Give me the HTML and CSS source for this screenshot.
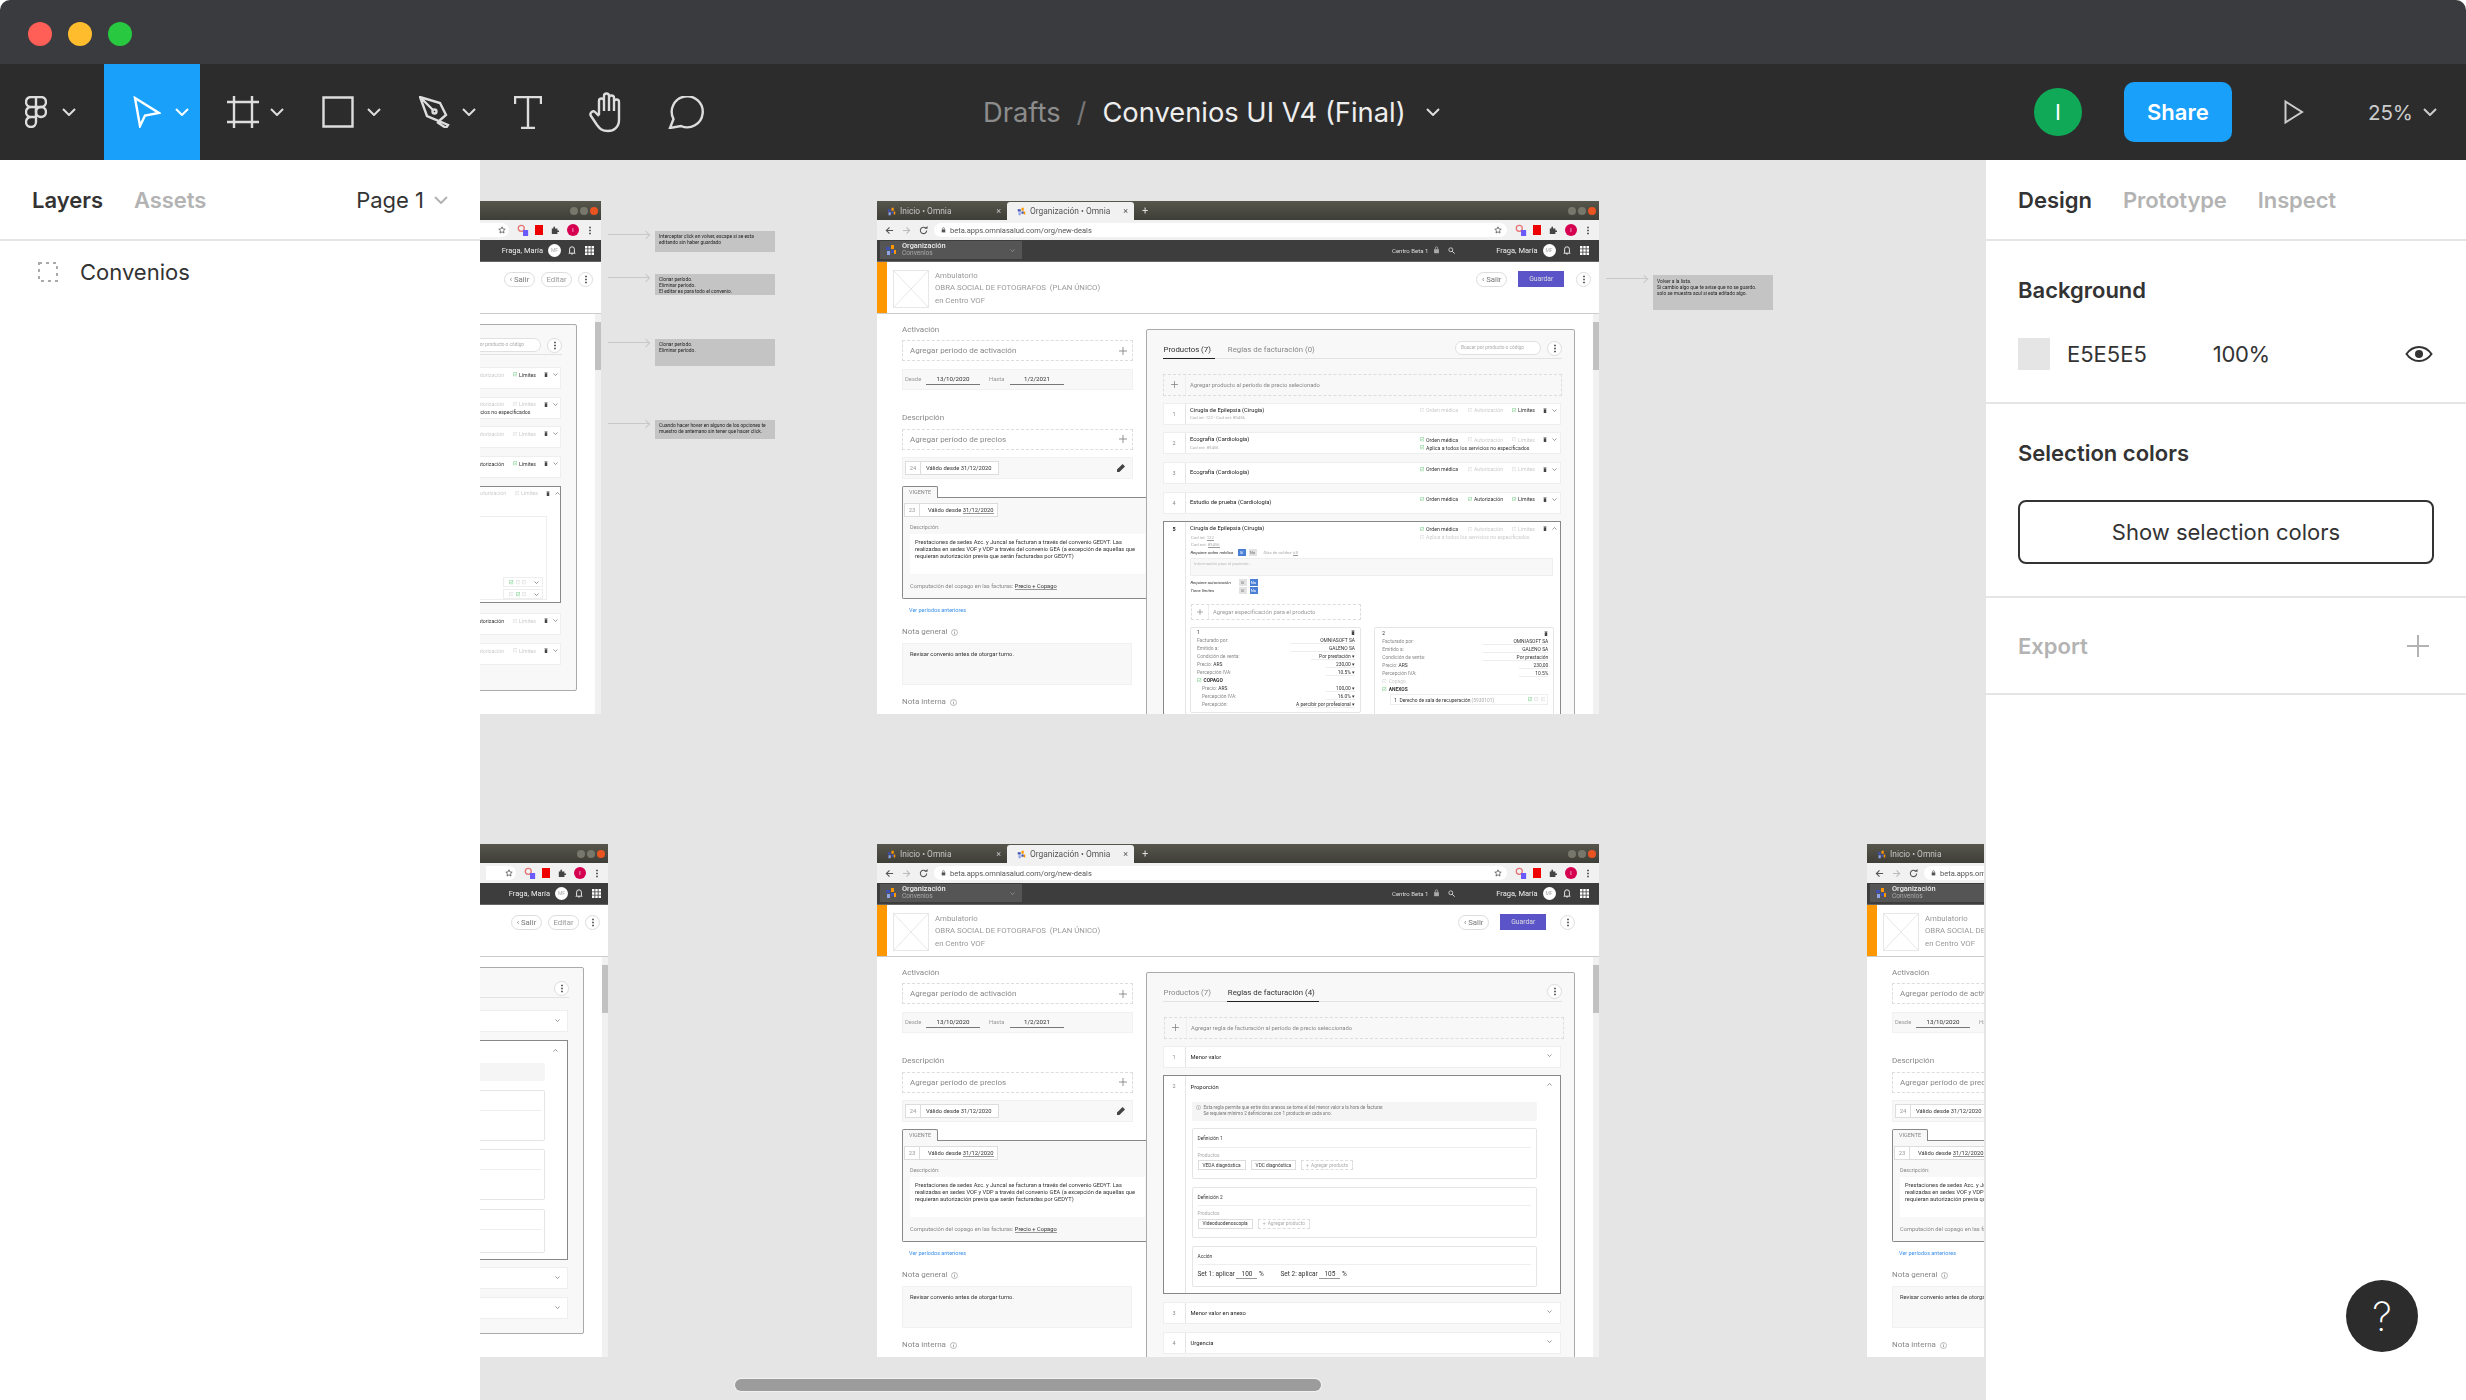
FILE: index.html
```html
<!DOCTYPE html>
<html lang="es">
<head>
    <meta charset="UTF-8">
    <title>Convenios UI V4 (Final) - Figma</title>
    <link rel="stylesheet" href="styles.css">
</head>
<body>
<svg class="sprite" width="0" height="0">
    <symbol id="i-logo" viewBox="0 0 12 12"><path fill="#3f51b5" d="M1 3h4v3H1zM6 6h3v3H6z"/><path fill="#ff9800" d="M6 1h3v4H6zM9 6h2v4H9z"/><path fill="#90a4e8" d="M2 7h3v4H2z"/></symbol>
    <symbol id="i-trash" viewBox="0 0 8 10"><path fill="#444" d="M1.500 2.500h5V10h-5zM1 1h6v1H1z"/></symbol>
    <symbol id="i-box" viewBox="0 0 10 10"><path fill="none" stroke="#ccc" d="M1 1h8v8H1z"/><path stroke="#ccc" d="M3.500 5h3"/></symbol>
    <symbol id="i-check" viewBox="0 0 10 10"><path fill="none" stroke="#5fc46f" d="M1 1h8v8H1z"/><path fill="none" stroke="#5fc46f" d="M2.500 5l2 2 4-5"/></symbol>
    <symbol id="i-down" viewBox="0 0 10 10"><path fill="none" stroke="#555" stroke-width="1.200" d="M1 3l4 4 4-4"/></symbol>
    <symbol id="i-up" viewBox="0 0 10 10"><path fill="none" stroke="#555" stroke-width="1.200" d="M1 7l4-4 4 4"/></symbol>
    <symbol id="i-plus" viewBox="0 0 10 10"><path stroke="#777" d="M5 0v10M0 5h10"/></symbol>
    <symbol id="i-dots" viewBox="0 0 4 12"><path fill="#333" d="M1 1h2v2H1zM1 5h2v2H1zM1 9h2v2H1z"/></symbol>
    <symbol id="i-info" viewBox="0 0 10 10"><circle cx="5" cy="5" r="4.300" fill="none" stroke="#888" stroke-width=".8"/><path stroke="#888" d="M5 4v3.500M5 2.300v1"/></symbol>
    <symbol id="i-bell" viewBox="0 0 10 12"><path fill="none" stroke="#fff" stroke-width="1.100" d="M2 9V5a3 3 0 0 1 6 0v4l1 1H1zM4 11h2"/></symbol>
    <symbol id="i-grid" viewBox="0 0 11 11"><path fill="#fff" d="M0 0h3v3H0zM4 0h3v3H4zM8 0h3v3H8zM0 4h3v3H0zM4 4h3v3H4zM8 4h3v3H8zM0 8h3v3H0zM4 8h3v3H4zM8 8h3v3H8z"/></symbol>
    <symbol id="i-pencil" viewBox="0 0 10 10"><path fill="#444" d="M7 0l3 3-7 7H0V7z"/></symbol>
    <symbol id="i-star" viewBox="0 0 10 10"><path fill="none" stroke="#555" d="M5 1l1.200 2.700 2.800.3-2.100 1.900.6 2.900L5 7.300 2.500 8.800l.6-2.900L1 4l2.800-.3z"/></symbol>
    <symbol id="i-puzzle" viewBox="0 0 10 10"><path fill="#444" d="M1 3h2V1.500a1 1 0 0 1 2 0V3h3v2.500H9.500a1 1 0 0 1 0 2H8V10H1z"/></symbol>
    <symbol id="i-reload" viewBox="0 0 10 10"><path fill="none" stroke="#555" stroke-width="1.200" d="M8.500 5A3.500 3.500 0 1 1 7.500 2.500"/><path fill="#555" d="M6 3h3.500V0z"/></symbol>
    <symbol id="i-back" viewBox="0 0 10 10"><path fill="none" stroke="#555" stroke-width="1.200" d="M9 5H1.500M5 1.500L1.500 5 5 8.500"/></symbol>
    <symbol id="i-fwd" viewBox="0 0 10 10"><path fill="none" stroke="#bbb" stroke-width="1.200" d="M1 5h7.500M5 1.500L8.500 5 5 8.500"/></symbol>
    <symbol id="i-lock" viewBox="0 0 8 10"><path fill="#555" d="M1 4h6v5H1z"/><path fill="none" stroke="#555" d="M2.500 4V2.500a1.500 1.500 0 0 1 3 0V4"/></symbol>
    <symbol id="i-search" viewBox="0 0 10 10"><circle cx="4" cy="4" r="2.800" fill="none" stroke="#ddd" stroke-width="1.200"/><path stroke="#ddd" stroke-width="1.400" d="M6 6l3.500 3.500"/></symbol>
    <symbol id="i-ext" viewBox="0 0 14 14"><circle cx="5" cy="5" r="3.500" fill="none" stroke="#e57373" stroke-width="1.500"/><path fill="#6a5af9" d="M7 7h6v7H7z"/></symbol>
</svg>

<div class="app">
    <div class="titlebar">
        <span class="light light-red"></span>
        <span class="light light-yellow"></span>
        <span class="light light-green"></span>
    </div>

    <div class="toolbar">
        <div class="tool tool-logo">
            <svg width="22" height="32" viewBox="0 0 22 32" class="tool-svg"><path d="M11 1H6a5 5 0 0 0 0 10h5zM11 1h5a5 5 0 0 1 0 10h-5zM11 11H6a5 5 0 0 0 0 10h5zM11 21H6a5 5 0 1 0 5 5z"/><circle cx="16" cy="16" r="5"/></svg>
            <svg class="chev" viewBox="0 0 14 8"><path d="M1 1l6 6 6-6"/></svg>
        </div>
        <div class="tool tool-active">
            <svg width="28" height="32" viewBox="0 0 28 32" class="tool-svg white"><path d="M2 2l24 15-14 2.500L7 30z"/></svg>
            <svg class="chev white" viewBox="0 0 14 8"><path d="M1 1l6 6 6-6"/></svg>
        </div>
        <div class="tool">
            <svg width="32" height="32" viewBox="0 0 32 32" class="tool-svg"><path d="M7 0v32M25 0v32M0 6h32M0 26h32"/></svg>
            <svg class="chev" viewBox="0 0 14 8"><path d="M1 1l6 6 6-6"/></svg>
        </div>
        <div class="tool tool-rect">
            <svg width="32" height="32" viewBox="0 0 32 32" class="tool-svg"><path d="M1.500 1.500h29v29h-29z"/></svg>
            <svg class="chev" viewBox="0 0 14 8"><path d="M1 1l6 6 6-6"/></svg>
        </div>
        <div class="tool">
            <svg width="32" height="32" viewBox="0 0 32 32" class="tool-svg"><path d="M1 1l20 6 6 12-7 6-12-5zM1 1l13 13M20 25l9 4-2 3-9-6"/><circle cx="15.500" cy="15.500" r="2"/></svg>
            <svg class="chev" viewBox="0 0 14 8"><path d="M1 1l6 6 6-6"/></svg>
        </div>
        <div class="tool tool-plain">
            <svg width="28" height="33" viewBox="0 0 28 33" class="tool-svg"><path d="M1 8V1h26v7M14 1v31M7 32h14"/></svg>
        </div>
        <div class="tool tool-plain">
            <svg width="36" height="41" viewBox="0 0 36 41" class="tool-svg"><path d="M10 23V9a2.500 2.500 0 0 1 5 0v10M15 19V4a2.500 2.500 0 0 1 5 0v15M20 19V6a2.500 2.500 0 0 1 5 0v13M25 19V10a2.500 2.500 0 0 1 5 0v18c0 7-5 11-11 11s-8-2-11-6L2 24c-2-3 2-6 4-4l4 4"/></svg>
        </div>
        <div class="tool tool-plain">
            <svg width="36" height="33" viewBox="0 0 36 33" class="tool-svg"><path d="M2 32l3.500-9A15.500 15.500 0 1 1 13 30z"/></svg>
        </div>

        <div class="doc-title">
            <span class="doc-folder">Drafts</span>
            <span class="doc-slash">/</span>
            <span class="doc-name">Convenios UI V4 (Final)</span>
            <svg class="chev" viewBox="0 0 14 8"><path d="M1 1l6 6 6-6"/></svg>
        </div>

        <div class="toolbar-right">
            <span class="avatar">I</span>
            <button class="share">Share</button>
            <svg class="play" width="20" height="24" viewBox="0 0 20 24"><path d="M1.500 1.500L18 12 1.500 22.500z"/></svg>
            <span class="zoom">25%</span>
            <svg class="chev" viewBox="0 0 14 8"><path d="M1 1l6 6 6-6"/></svg>
        </div>
    </div>

    <div class="main">
        <aside class="side side-left">
            <div class="side-tabs">
                <span class="tab-on">Layers</span>
                <span class="tab-off">Assets</span>
                <span class="page-name">Page 1</span>
                <svg class="chev chev-light" viewBox="0 0 14 8"><path d="M1 1l6 6 6-6"/></svg>
            </div>
            <div class="layer-row">
                <svg class="layer-icon" width="20" height="20" viewBox="0 0 20 20"><path d="M1 1h18v18H1z"/></svg>
                <span>Convenios</span>
            </div>
        </aside>

        <div class="canvas">
            <!-- notas del frame superior izquierdo -->
            <div class="note-line note-a"><span class="arrow"></span><div class="note note-h1">Interceptar click en volver, escape si se esta<br>editando sin haber guardado</div></div>
            <div class="note-line note-b"><span class="arrow"></span><div class="note note-h1">Clonar período.<br>Eliminar período.<br>El editar es para todo el convenio.</div></div>
            <div class="note-line note-c"><span class="arrow"></span><div class="note note-h2">Clonar período.<br>Eliminar período.</div></div>
            <div class="note-line note-d"><span class="arrow"></span><div class="note note-h3">Cuando hacer hover en alguno de los opciones te<br>muestro de antemano sin tener que hacer click.</div></div>
            <div class="note-line note-e"><span class="arrow"></span><div class="note note-h4">Volver a la lista.<br>Si cambio algo que te avise que no se guardo.<br>solo se muestra azul si esta editado algo.</div></div>

            <!-- frame A: solo se ve el borde derecho -->
            <div class="frame frame-a">
                <div class="f-tabs"><span class="win"><i></i><i></i><i class="win-close"></i></span></div>
                <div class="f-addr f-addr-right">
                    <span class="addr-pill addr-pill-end"><svg class="ic ic-star"><use href="#i-star"/></svg></span>
                    <svg class="ic ic-ext"><use href="#i-ext"/></svg><span class="ext-red"></span><svg class="ic ic-puzzle"><use href="#i-puzzle"/></svg><span class="profile">I</span><svg class="ic ic-dots"><use href="#i-dots"/></svg>
                </div>
                <div class="f-app f-app-right">
                    <span class="user">Fraga, María</span><span class="mf">MF</span><svg class="ic ic-bell"><use href="#i-bell"/></svg><svg class="ic ic-grid"><use href="#i-grid"/></svg>
                </div>
                <div class="f-head f-head-right">
                    <span class="pill">‹ Salir</span><span class="pill pill-muted">Editar</span><span class="dots-btn"><svg class="ic ic-dots"><use href="#i-dots"/></svg></span>
                </div>
                <div class="f-body">
                    <div class="f-left"></div>
                    <div class="panel panel-short panel-a">
                        <div class="p-top">
                            <span class="search search-a">Buscar por producto o código</span>
                            <span class="dots-btn"><svg class="ic ic-dots"><use href="#i-dots"/></svg></span>
                        </div>
                        <div class="p-rows p-rows-a">
                            <div class="row"><div class="flags"><div class="flag-line"><span class="flag flag-o off"></span><span class="flag flag-a off"><svg class="ic ic-flag"><use href="#i-box"/></svg>Autorización</span><span class="flag flag-l"><svg class="ic ic-flag"><use href="#i-check"/></svg>Límites</span><svg class="ic ic-trash"><use href="#i-trash"/></svg><svg class="ic ic-chev"><use href="#i-down"/></svg></div></div></div>
                            <div class="row"><div class="flags"><div class="flag-line"><span class="flag flag-o off"></span><span class="flag flag-a off"><svg class="ic ic-flag"><use href="#i-box"/></svg>Autorización</span><span class="flag flag-l off"><svg class="ic ic-flag"><use href="#i-box"/></svg>Límites</span><svg class="ic ic-trash"><use href="#i-trash"/></svg><svg class="ic ic-chev"><use href="#i-down"/></svg></div><div class="flag-line"><span class="flag"><svg class="ic ic-flag"><use href="#i-check"/></svg>Aplica a todos los servicios no especificados</span></div></div></div>
                            <div class="row"><div class="flags"><div class="flag-line"><span class="flag flag-o off"></span><span class="flag flag-a off"><svg class="ic ic-flag"><use href="#i-box"/></svg>Autorización</span><span class="flag flag-l off"><svg class="ic ic-flag"><use href="#i-box"/></svg>Límites</span><svg class="ic ic-trash"><use href="#i-trash"/></svg><svg class="ic ic-chev"><use href="#i-down"/></svg></div></div></div>
                            <div class="row"><div class="flags"><div class="flag-line"><span class="flag flag-o"></span><span class="flag flag-a"><svg class="ic ic-flag"><use href="#i-check"/></svg>Autorización</span><span class="flag flag-l"><svg class="ic ic-flag"><use href="#i-check"/></svg>Límites</span><svg class="ic ic-trash"><use href="#i-trash"/></svg><svg class="ic ic-chev"><use href="#i-down"/></svg></div></div></div>
                            <div class="row row-open row-open-a">
                                <div class="flags"><div class="flag-line"><span class="flag flag-o off"></span><span class="flag flag-a off"><svg class="ic ic-flag"><use href="#i-box"/></svg>Autorización</span><span class="flag flag-l off"><svg class="ic ic-flag"><use href="#i-box"/></svg>Límites</span><svg class="ic ic-trash"><use href="#i-trash"/></svg><svg class="ic ic-chev"><use href="#i-up"/></svg></div></div>
                                <div class="a-card">
                                    <div class="a-mini"><svg class="ic ic-flag"><use href="#i-check"/></svg><svg class="ic ic-flag"><use href="#i-box"/></svg><svg class="ic ic-flag"><use href="#i-box"/></svg><svg class="ic ic-chev"><use href="#i-down"/></svg></div>
                                    <div class="a-mini"><svg class="ic ic-flag"><use href="#i-box"/></svg><svg class="ic ic-flag"><use href="#i-check"/></svg><svg class="ic ic-flag"><use href="#i-box"/></svg><svg class="ic ic-chev"><use href="#i-down"/></svg></div>
                                </div>
                            </div>
                            <div class="row row-after-a"><div class="flags"><div class="flag-line"><span class="flag flag-o off"></span><span class="flag flag-a"><svg class="ic ic-flag"><use href="#i-check"/></svg>Autorización</span><span class="flag flag-l off"><svg class="ic ic-flag"><use href="#i-box"/></svg>Límites</span><svg class="ic ic-trash"><use href="#i-trash"/></svg><svg class="ic ic-chev"><use href="#i-down"/></svg></div></div></div>
                            <div class="row"><div class="flags"><div class="flag-line"><span class="flag flag-o off"></span><span class="flag flag-a off"><svg class="ic ic-flag"><use href="#i-box"/></svg>Autorización</span><span class="flag flag-l off"><svg class="ic ic-flag"><use href="#i-box"/></svg>Límites</span><svg class="ic ic-trash"><use href="#i-trash"/></svg><svg class="ic ic-chev"><use href="#i-down"/></svg></div></div></div>
                        </div>
                    </div>
                    <div class="f-scroll"><span class="thumb"></span></div>
                </div>
            </div>

            <!-- frame B: productos -->
            <div class="frame frame-b">
                <div class="f-tabs">
                    <span class="tab"><svg class="ic ic-logo"><use href="#i-logo"/></svg>Inicio • Omnia<b>×</b></span>
                    <span class="tab tab-active"><svg class="ic ic-logo"><use href="#i-logo"/></svg>Organización • Omnia<b>×</b></span>
                    <span class="tab-plus">+</span>
                    <span class="win"><i></i><i></i><i class="win-close"></i></span>
                </div>
                <div class="f-addr">
                    <svg class="ic ic-nav"><use href="#i-back"/></svg><svg class="ic ic-nav"><use href="#i-fwd"/></svg><svg class="ic ic-nav"><use href="#i-reload"/></svg>
                    <span class="addr-pill"><svg class="ic ic-lock"><use href="#i-lock"/></svg><span class="url">beta.apps.omniasalud.com/org/new-deals</span><svg class="ic ic-star"><use href="#i-star"/></svg></span>
                    <svg class="ic ic-ext"><use href="#i-ext"/></svg><span class="ext-red"></span><svg class="ic ic-puzzle"><use href="#i-puzzle"/></svg><span class="profile">I</span><svg class="ic ic-dots"><use href="#i-dots"/></svg>
                </div>
                <div class="f-app">
                    <div class="org"><svg class="ic ic-org"><use href="#i-logo"/></svg><div class="org-text"><strong>Organización</strong><span>Convenios</span></div><svg class="ic ic-org-chev"><use href="#i-down"/></svg></div>
                    <span class="centro">Centro Beta 1</span><svg class="ic ic-lock2"><use href="#i-lock"/></svg><svg class="ic ic-search"><use href="#i-search"/></svg>
                    <span class="user">Fraga, María</span><span class="mf">MF</span><svg class="ic ic-bell"><use href="#i-bell"/></svg><svg class="ic ic-grid"><use href="#i-grid"/></svg>
                </div>
                <div class="f-head">
                    <span class="stripe"></span>
                    <svg class="thumbnail" viewBox="0 0 36 38" preserveAspectRatio="none"><path d="M.500.500h35v37H.500zM.500.500l35 37M35.500.500l-35 37"/></svg>
                    <div class="head-text"><span>Ambulatorio</span><span>OBRA SOCIAL DE FOTOGRAFOS &nbsp;(PLAN ÚNICO)</span><span>en Centro VOF</span></div>
                    <span class="pill pill-first">‹ Salir</span><span class="save">Guardar</span><span class="dots-btn dots-head"><svg class="ic ic-dots"><use href="#i-dots"/></svg></span>
                </div>
                <div class="f-body">
                    <div class="f-left">
                        <h4 class="lbl">Activación</h4>
                        <div class="add-box">Agregar período de activación<svg class="ic ic-plus"><use href="#i-plus"/></svg></div>
                        <div class="dates"><span class="d-lbl">Desde</span><span class="d-val">13/10/2020</span><span class="d-lbl d-lbl-2">Hasta</span><span class="d-val">1/2/2021</span></div>
                        <h4 class="lbl lbl-desc">Descripción</h4>
                        <div class="add-box">Agregar período de precios<svg class="ic ic-plus"><use href="#i-plus"/></svg></div>
                        <div class="period"><span class="chip"><span class="chip-n">24</span><span class="chip-t">Válido desde 31/12/2020</span></span><svg class="ic ic-pencil"><use href="#i-pencil"/></svg></div>
                        <span class="vig-tab">VIGENTE</span>
                        <div class="vig">
                            <span class="chip chip-vig"><span class="chip-n">23</span><span class="chip-t">Válido desde <u>31/12/2020</u></span></span>
                            <div class="vig-lbl">Descripción:</div>
                            <div class="vig-text">Prestaciones de sedes Azc. y Juncal se facturan a través del convenio GEDYT. Las realizadas en sedes VOF y VDP a través del convenio GEA (a excepción de aquellas que requieran autorización previa que serán facturadas por GEDYT)</div>
                            <div class="vig-foot">Computación del copago en las facturas: <u>Precio + Copago</u></div>
                        </div>
                        <a class="prev">Ver períodos anteriores</a>
                        <h4 class="lbl lbl-note">Nota general <svg class="ic ic-info"><use href="#i-info"/></svg></h4>
                        <div class="note-box">Revisar convenio antes de otorgar turno.</div>
                        <h4 class="lbl lbl-int">Nota interna <svg class="ic ic-info"><use href="#i-info"/></svg></h4>
                    </div>
                    <div class="panel">
                        <div class="p-top">
                            <span class="p-tab p-tab-on">Productos (7)</span>
                            <span class="p-tab">Reglas de facturación (0)</span>
                            <span class="search">Buscar por producto o código</span>
                            <span class="dots-btn"><svg class="ic ic-dots"><use href="#i-dots"/></svg></span>
                        </div>
                        <div class="p-add"><span class="p-add-plus"><svg class="ic ic-plus"><use href="#i-plus"/></svg></span>Agregar producto al período de precio selecionado</div>
                        <div class="p-rows">
                            <div class="row"><span class="row-n">1</span><div class="row-main"><div class="row-title">Cirugía de Epilepsia (Cirugía)</div><div class="row-sub">Cod int: 122 - Cod ext: 89456</div></div><div class="flags"><div class="flag-line"><span class="flag flag-o off"><svg class="ic ic-flag"><use href="#i-box"/></svg>Orden médica</span><span class="flag flag-a off"><svg class="ic ic-flag"><use href="#i-box"/></svg>Autorización</span><span class="flag flag-l"><svg class="ic ic-flag"><use href="#i-check"/></svg>Límites</span><svg class="ic ic-trash"><use href="#i-trash"/></svg><svg class="ic ic-chev"><use href="#i-down"/></svg></div></div></div>
                            <div class="row"><span class="row-n">2</span><div class="row-main"><div class="row-title">Ecografía (Cardiología)</div><div class="row-sub">Cod ext: 89456</div></div><div class="flags"><div class="flag-line"><span class="flag flag-o"><svg class="ic ic-flag"><use href="#i-check"/></svg>Orden médica</span><span class="flag flag-a off"><svg class="ic ic-flag"><use href="#i-box"/></svg>Autorización</span><span class="flag flag-l off"><svg class="ic ic-flag"><use href="#i-box"/></svg>Límites</span><svg class="ic ic-trash"><use href="#i-trash"/></svg><svg class="ic ic-chev"><use href="#i-down"/></svg></div><div class="flag-line"><span class="flag"><svg class="ic ic-flag"><use href="#i-check"/></svg>Aplica a todos los servicios no especificados</span></div></div></div>
                            <div class="row"><span class="row-n">3</span><div class="row-main"><div class="row-title">Ecografía (Cardiología)</div></div><div class="flags"><div class="flag-line"><span class="flag flag-o"><svg class="ic ic-flag"><use href="#i-check"/></svg>Orden médica</span><span class="flag flag-a off"><svg class="ic ic-flag"><use href="#i-box"/></svg>Autorización</span><span class="flag flag-l off"><svg class="ic ic-flag"><use href="#i-box"/></svg>Límites</span><svg class="ic ic-trash"><use href="#i-trash"/></svg><svg class="ic ic-chev"><use href="#i-down"/></svg></div></div></div>
                            <div class="row"><span class="row-n">4</span><div class="row-main"><div class="row-title">Estudio de prueba (Cardiología)</div></div><div class="flags"><div class="flag-line"><span class="flag flag-o"><svg class="ic ic-flag"><use href="#i-check"/></svg>Orden médica</span><span class="flag flag-a"><svg class="ic ic-flag"><use href="#i-check"/></svg>Autorización</span><span class="flag flag-l"><svg class="ic ic-flag"><use href="#i-check"/></svg>Límites</span><svg class="ic ic-trash"><use href="#i-trash"/></svg><svg class="ic ic-chev"><use href="#i-down"/></svg></div></div></div>
                            <div class="row row-open">
                                <span class="row-n row-n-on">5</span>
                                <div class="row-detail">
                                    <div class="row-head">
                                        <div class="row-main"><div class="row-title">Cirugía de Epilepsia (Cirugía)</div><div class="cod cod-first">Cod int: <u>122</u></div><div class="cod">Cod ext: <u>89456</u></div></div>
                                        <div class="flags"><div class="flag-line"><span class="flag flag-o"><svg class="ic ic-flag"><use href="#i-check"/></svg>Orden médica</span><span class="flag flag-a off"><svg class="ic ic-flag"><use href="#i-box"/></svg>Autorización</span><span class="flag flag-l off"><svg class="ic ic-flag"><use href="#i-box"/></svg>Límites</span><svg class="ic ic-trash"><use href="#i-trash"/></svg><svg class="ic ic-chev"><use href="#i-up"/></svg></div><div class="flag-line"><span class="flag off"><svg class="ic ic-flag"><use href="#i-box"/></svg>Aplica a todos los servicios no especificados</span></div></div>
                                    </div>
                                    <div class="req"><em>Requiere orden médica</em><span class="yn on">Sí</span><span class="yn">No</span><em class="req-days">Días de validez: <u>60</u></em></div>
                                    <div class="patient">Información para el paciente...</div>
                                    <div class="req req-2"><em>Requiere autorización</em><span class="yn">Sí</span><span class="yn on">No</span></div>
                                    <div class="req req-3"><em>Tiene límites</em><span class="yn">Sí</span><span class="yn on">No</span></div>
                                    <div class="spec"><span class="spec-plus"><svg class="ic ic-plus"><use href="#i-plus"/></svg></span>Agregar especificación para el producto</div>
                                    <div class="cards">
                                        <div class="card">
                                            <div class="card-top"><span>1</span><svg class="ic ic-trash"><use href="#i-trash"/></svg></div>
                                            <div class="kv"><span>Facturado por:</span><b class="w-l">OMNIASOFT SA</b></div>
                                            <div class="kv"><span>Emitido a:</span><b class="w-l">GALENO SA</b></div>
                                            <div class="kv"><span>Condición de venta:</span><b class="w-m">Por prestación ▾</b></div>
                                            <div class="kv"><span>Precio: <i>ARS</i></span><b class="w-s">230,00 ▾</b></div>
                                            <div class="kv"><span>Percepción IVA:</span><b class="w-s">10.5% ▾</b></div>
                                            <div class="kv kv-head"><svg class="ic ic-flag"><use href="#i-check"/></svg>COPAGO</div>
                                            <div class="kv kv-in"><span>Precio: <i>ARS</i></span><b class="w-s">100,00 ▾</b></div>
                                            <div class="kv kv-in"><span>Percepción IVA:</span><b class="w-s">16.0% ▾</b></div>
                                            <div class="kv kv-in"><span>Percepción:</span><b>A percibir por profesional ▾</b></div>
                                        </div>
                                        <div class="card card-2">
                                            <div class="card-top"><span>2</span><svg class="ic ic-trash"><use href="#i-trash"/></svg></div>
                                            <div class="kv"><span>Facturado por:</span><b class="w-l">OMNIASOFT SA</b></div>
                                            <div class="kv"><span>Emitido a:</span><b class="w-l">GALENO SA</b></div>
                                            <div class="kv"><span>Condición de venta:</span><b class="w-l">Por prestación</b></div>
                                            <div class="kv"><span>Precio: <i>ARS</i></span><b class="w-s">230,00</b></div>
                                            <div class="kv"><span>Percepción IVA:</span><b class="w-s">10.5%</b></div>
                                            <div class="kv kv-off"><svg class="ic ic-flag"><use href="#i-box"/></svg>Copago</div>
                                            <div class="kv kv-head"><svg class="ic ic-flag"><use href="#i-check"/></svg>ANEXOS</div>
                                            <div class="anexo"><span>1 &nbsp;Derecho de sala de recuperación <i>(5930101)</i></span><svg class="ic ic-flag"><use href="#i-check"/></svg><svg class="ic ic-flag"><use href="#i-box"/></svg><svg class="ic ic-flag"><use href="#i-box"/></svg></div>
                                        </div>
                                    </div>
                                </div>
                            </div>
                        </div>
                    </div>
                    <div class="f-scroll"><span class="thumb"></span></div>
                </div>
            </div>

            <!-- frame C: solo se ve el borde derecho -->
            <div class="frame frame-c">
                <div class="f-tabs"><span class="win"><i></i><i></i><i class="win-close"></i></span></div>
                <div class="f-addr f-addr-right">
                    <span class="addr-pill addr-pill-end"><svg class="ic ic-star"><use href="#i-star"/></svg></span>
                    <svg class="ic ic-ext"><use href="#i-ext"/></svg><span class="ext-red"></span><svg class="ic ic-puzzle"><use href="#i-puzzle"/></svg><span class="profile">I</span><svg class="ic ic-dots"><use href="#i-dots"/></svg>
                </div>
                <div class="f-app f-app-right">
                    <span class="user">Fraga, María</span><span class="mf">MF</span><svg class="ic ic-bell"><use href="#i-bell"/></svg><svg class="ic ic-grid"><use href="#i-grid"/></svg>
                </div>
                <div class="f-head f-head-right">
                    <span class="pill">‹ Salir</span><span class="pill pill-muted">Editar</span><span class="dots-btn"><svg class="ic ic-dots"><use href="#i-dots"/></svg></span>
                </div>
                <div class="f-body">
                    <div class="f-left"></div>
                    <div class="panel panel-short panel-a">
                        <div class="p-top"><span class="search search-none"></span><span class="dots-btn"><svg class="ic ic-dots"><use href="#i-dots"/></svg></span></div>
                        <div class="p-rows p-rows-c">
                            <div class="row"><svg class="ic ic-chev ic-chev-end"><use href="#i-down"/></svg></div>
                            <div class="row row-open row-open-c">
                                <svg class="ic ic-chev ic-chev-end"><use href="#i-up"/></svg>
                                <div class="c-stack">
                                    <div class="c-info"></div>
                                    <div class="c-def"><span></span></div>
                                    <div class="c-def"><span></span></div>
                                    <div class="c-def c-def-last"><span></span></div>
                                </div>
                            </div>
                            <div class="row row-after-c"><svg class="ic ic-chev ic-chev-end"><use href="#i-down"/></svg></div>
                            <div class="row"><svg class="ic ic-chev ic-chev-end"><use href="#i-down"/></svg></div>
                        </div>
                    </div>
                    <div class="f-scroll"><span class="thumb"></span></div>
                </div>
            </div>

            <!-- frame D: reglas de facturación -->
            <div class="frame frame-d">
                <div class="f-tabs">
                    <span class="tab"><svg class="ic ic-logo"><use href="#i-logo"/></svg>Inicio • Omnia<b>×</b></span>
                    <span class="tab tab-active"><svg class="ic ic-logo"><use href="#i-logo"/></svg>Organización • Omnia<b>×</b></span>
                    <span class="tab-plus">+</span>
                    <span class="win"><i></i><i></i><i class="win-close"></i></span>
                </div>
                <div class="f-addr">
                    <svg class="ic ic-nav"><use href="#i-back"/></svg><svg class="ic ic-nav"><use href="#i-fwd"/></svg><svg class="ic ic-nav"><use href="#i-reload"/></svg>
                    <span class="addr-pill"><svg class="ic ic-lock"><use href="#i-lock"/></svg><span class="url">beta.apps.omniasalud.com/org/new-deals</span><svg class="ic ic-star"><use href="#i-star"/></svg></span>
                    <svg class="ic ic-ext"><use href="#i-ext"/></svg><span class="ext-red"></span><svg class="ic ic-puzzle"><use href="#i-puzzle"/></svg><span class="profile">I</span><svg class="ic ic-dots"><use href="#i-dots"/></svg>
                </div>
                <div class="f-app">
                    <div class="org"><svg class="ic ic-org"><use href="#i-logo"/></svg><div class="org-text"><strong>Organización</strong><span>Convenios</span></div><svg class="ic ic-org-chev"><use href="#i-down"/></svg></div>
                    <span class="centro">Centro Beta 1</span><svg class="ic ic-lock2"><use href="#i-lock"/></svg><svg class="ic ic-search"><use href="#i-search"/></svg>
                    <span class="user">Fraga, María</span><span class="mf">MF</span><svg class="ic ic-bell"><use href="#i-bell"/></svg><svg class="ic ic-grid"><use href="#i-grid"/></svg>
                </div>
                <div class="f-head f-head-d">
                    <span class="stripe"></span>
                    <svg class="thumbnail" viewBox="0 0 36 38" preserveAspectRatio="none"><path d="M.500.500h35v37H.500zM.500.500l35 37M35.500.500l-35 37"/></svg>
                    <div class="head-text"><span>Ambulatorio</span><span>OBRA SOCIAL DE FOTOGRAFOS &nbsp;(PLAN ÚNICO)</span><span>en Centro VOF</span></div>
                    <span class="pill pill-first">‹ Salir</span><span class="save">Guardar</span><span class="dots-btn dots-head"><svg class="ic ic-dots"><use href="#i-dots"/></svg></span>
                </div>
                <div class="f-body">
                    <div class="f-left">
                        <h4 class="lbl">Activación</h4>
                        <div class="add-box">Agregar período de activación<svg class="ic ic-plus"><use href="#i-plus"/></svg></div>
                        <div class="dates"><span class="d-lbl">Desde</span><span class="d-val">13/10/2020</span><span class="d-lbl d-lbl-2">Hasta</span><span class="d-val">1/2/2021</span></div>
                        <h4 class="lbl lbl-desc">Descripción</h4>
                        <div class="add-box">Agregar período de precios<svg class="ic ic-plus"><use href="#i-plus"/></svg></div>
                        <div class="period"><span class="chip"><span class="chip-n">24</span><span class="chip-t">Válido desde 31/12/2020</span></span><svg class="ic ic-pencil"><use href="#i-pencil"/></svg></div>
                        <span class="vig-tab">VIGENTE</span>
                        <div class="vig">
                            <span class="chip chip-vig"><span class="chip-n">23</span><span class="chip-t">Válido desde <u>31/12/2020</u></span></span>
                            <div class="vig-lbl">Descripción:</div>
                            <div class="vig-text">Prestaciones de sedes Azc. y Juncal se facturan a través del convenio GEDYT. Las realizadas en sedes VOF y VDP a través del convenio GEA (a excepción de aquellas que requieran autorización previa que serán facturadas por GEDYT)</div>
                            <div class="vig-foot">Computación del copago en las facturas: <u>Precio + Copago</u></div>
                        </div>
                        <a class="prev">Ver períodos anteriores</a>
                        <h4 class="lbl lbl-note">Nota general <svg class="ic ic-info"><use href="#i-info"/></svg></h4>
                        <div class="note-box">Revisar convenio antes de otorgar turno.</div>
                        <h4 class="lbl lbl-int">Nota interna <svg class="ic ic-info"><use href="#i-info"/></svg></h4>
                    </div>
                    <div class="panel">
                        <div class="p-top">
                            <span class="p-tab">Productos (7)</span>
                            <span class="p-tab p-tab-on">Reglas de facturación (4)</span>
                            <span class="search search-none"></span>
                            <span class="dots-btn"><svg class="ic ic-dots"><use href="#i-dots"/></svg></span>
                        </div>
                        <div class="p-add p-add-d"><span class="p-add-plus"><svg class="ic ic-plus"><use href="#i-plus"/></svg></span>Agregar regla de facturación al período de precio seleccionado</div>
                        <div class="p-rows">
                            <div class="row"><span class="row-n">1</span><div class="rule-name">Menor valor</div><svg class="ic ic-chev ic-chev-rule"><use href="#i-down"/></svg></div>
                            <div class="row row-open row-rule">
                                <span class="row-n row-n-top">2</span>
                                <div class="row-detail rule-detail">
                                    <div class="rule-head"><div class="rule-name">Proporción</div><svg class="ic ic-chev ic-chev-rule"><use href="#i-up"/></svg></div>
                                    <div class="rule-info"><svg class="ic ic-info"><use href="#i-info"/></svg><span>Esta regla permite que entre dos anexos se tome el del menor valor a la hora de facturar.<br>Se requiere mínimo 2 definiciones con 1 producto en cada uno.</span></div>
                                    <div class="def">
                                        <div class="def-title">Definición 1</div>
                                        <div class="def-lbl">Productos</div>
                                        <div class="def-chips"><span class="p-chip">VEDA diagnóstica</span><span class="p-chip">VDC diagnóstica</span><span class="p-chip p-chip-add">+ &nbsp;Agregar producto</span></div>
                                    </div>
                                    <div class="def">
                                        <div class="def-title">Definición 2</div>
                                        <div class="def-lbl">Productos</div>
                                        <div class="def-chips"><span class="p-chip">Videoduodenoscopía</span><span class="p-chip p-chip-add">+ &nbsp;Agregar producto</span></div>
                                    </div>
                                    <div class="def def-action">
                                        <div class="def-title">Acción</div>
                                        <div class="set">Set 1: aplicar <u>100</u> % <span>Set 2: aplicar <u>105</u> %</span></div>
                                    </div>
                                </div>
                            </div>
                            <div class="row"><span class="row-n">3</span><div class="rule-name">Menor valor en anexo</div><svg class="ic ic-chev ic-chev-rule"><use href="#i-down"/></svg></div>
                            <div class="row"><span class="row-n">4</span><div class="rule-name">Urgencia</div><svg class="ic ic-chev ic-chev-rule"><use href="#i-down"/></svg></div>
                        </div>
                    </div>
                    <div class="f-scroll"><span class="thumb"></span></div>
                </div>
            </div>

            <!-- frame E: cortado por el panel derecho -->
            <div class="frame frame-e">
                <div class="f-tabs"><span class="tab"><svg class="ic ic-logo"><use href="#i-logo"/></svg>Inicio • Omnia</span></div>
                <div class="f-addr">
                    <svg class="ic ic-nav"><use href="#i-back"/></svg><svg class="ic ic-nav"><use href="#i-fwd"/></svg><svg class="ic ic-nav"><use href="#i-reload"/></svg>
                    <span class="addr-pill"><svg class="ic ic-lock"><use href="#i-lock"/></svg><span class="url">beta.apps.omniasalud.com/org/new-deals</span></span>
                </div>
                <div class="f-app"><div class="org"><svg class="ic ic-org"><use href="#i-logo"/></svg><div class="org-text"><strong>Organización</strong><span>Convenios</span></div></div></div>
                <div class="f-head">
                    <span class="stripe"></span>
                    <svg class="thumbnail" viewBox="0 0 36 38" preserveAspectRatio="none"><path d="M.500.500h35v37H.500zM.500.500l35 37M35.500.500l-35 37"/></svg>
                    <div class="head-text"><span>Ambulatorio</span><span>OBRA SOCIAL DE FOTOGRAFOS &nbsp;(PLAN ÚNICO)</span><span>en Centro VOF</span></div>
                </div>
                <div class="f-body">
                    <div class="f-left">
                        <h4 class="lbl">Activación</h4>
                        <div class="add-box">Agregar período de activación</div>
                        <div class="dates"><span class="d-lbl">Desde</span><span class="d-val">13/10/2020</span><span class="d-lbl d-lbl-2">Hasta</span></div>
                        <h4 class="lbl lbl-desc">Descripción</h4>
                        <div class="add-box">Agregar período de precios</div>
                        <div class="period"><span class="chip"><span class="chip-n">24</span><span class="chip-t">Válido desde 31/12/2020</span></span></div>
                        <span class="vig-tab">VIGENTE</span>
                        <div class="vig">
                            <span class="chip chip-vig"><span class="chip-n">23</span><span class="chip-t">Válido desde <u>31/12/2020</u></span></span>
                            <div class="vig-lbl">Descripción:</div>
                            <div class="vig-text">Prestaciones de sedes Azc. y Juncal se facturan a través del convenio GEDYT. Las realizadas en sedes VOF y VDP a través del convenio GEA (a excepción de aquellas que requieran autorización previa que serán facturadas por GEDYT)</div>
                            <div class="vig-foot">Computación del copago en las facturas: <u>Precio + Copago</u></div>
                        </div>
                        <a class="prev">Ver períodos anteriores</a>
                        <h4 class="lbl lbl-note">Nota general <svg class="ic ic-info"><use href="#i-info"/></svg></h4>
                        <div class="note-box">Revisar convenio antes de otorgar turno.</div>
                        <h4 class="lbl lbl-int">Nota interna <svg class="ic ic-info"><use href="#i-info"/></svg></h4>
                    </div>
                </div>
            </div>

            <span class="hscroll"></span>
        </div>

        <aside class="side side-right">
            <div class="side-tabs side-tabs-r">
                <span class="tab-on">Design</span>
                <span class="tab-off">Prototype</span>
                <span class="tab-off">Inspect</span>
            </div>
            <section class="sec sec-bg">
                <h3>Background</h3>
                <div class="bg-row">
                    <span class="swatch"></span>
                    <span class="bg-hex">E5E5E5</span>
                    <span class="bg-pct">100%</span>
                    <svg class="eye" width="28" height="18" viewBox="0 0 28 18"><path d="M1.500 9C5 4 9 2 14 2s9 2 12.500 7C23 14 19 16 14 16S5 14 1.500 9z"/><circle cx="14" cy="9" r="4"/></svg>
                </div>
            </section>
            <section class="sec sec-sel">
                <h3>Selection colors</h3>
                <button class="show-btn">Show selection colors</button>
            </section>
            <section class="sec sec-export">
                <h3>Export</h3>
                <svg width="22" height="22" viewBox="0 0 22 22"><path d="M11 0v22M0 11h22"/></svg>
            </section>
        </aside>
    </div>

    <div class="help">?</div>
</div>
</body>
</html>
```
FILE: styles.css
```css
* {
    box-sizing: border-box;
}
html, body {
    margin: 0;
    background: #fff;
}
.sprite {
    position: absolute;
}
.app {
    position: relative;
    width: 2466px;
    height: 1400px;
    overflow: hidden;
    display: flex;
    flex-direction: column;
    border-radius: 10px;
    font-family: Inter, "Liberation Sans", sans-serif;
    color: #333;
}

/* title bar */
.titlebar {
    height: 64px;
    flex: none;
    background: #3a3b3e;
    display: flex;
    align-items: center;
    gap: 16px;
    padding: 4px 0 0 28px;
}
.light {
    width: 24px;
    height: 24px;
    border-radius: 50%;
}
.light-red { background: #ff5f57; }
.light-yellow { background: #ffbd2e; }
.light-green { background: #28c840; }

/* toolbar */
.toolbar {
    height: 96px;
    flex: none;
    background: #2c2c2c;
    display: flex;
    align-items: center;
    color: #ddd;
}
.tool {
    width: 96px;
    height: 96px;
    display: flex;
    align-items: center;
    gap: 11px;
    padding-left: 27px;
}
.tool-logo {
    width: 104px;
    padding-left: 25px;
    gap: 15px;
}
.tool-active {
    background: #18a0fb;
    padding-left: 29px;
    gap: 14px;
}
.tool-rect {
    padding-left: 26px;
    gap: 13px;
}
.tool-plain {
    width: 79px;
    padding: 0;
    justify-content: center;
}
.tool-svg {
    flex: none;
    fill: none;
    stroke: #ddd;
    stroke-width: 2.4;
}
.tool-svg.white {
    stroke: #fff;
}
.chev {
    width: 14px;
    height: 8px;
    flex: none;
    fill: none;
    stroke: #ddd;
    stroke-width: 2;
}
.chev.white {
    stroke: #fff;
}
.chev-light {
    stroke: #b3b3b3;
}
.doc-title {
    display: flex;
    align-items: center;
    margin-left: 258px;
    font-size: 27.300px;
}
.doc-folder {
    color: #8c8c8c;
}
.doc-slash {
    color: #777;
    margin: 0 16px;
}
.doc-name {
    color: #eee;
}
.doc-title .chev {
    margin-left: 20px;
}
.toolbar-right {
    margin-left: auto;
    display: flex;
    align-items: center;
    padding-right: 29px;
}
.avatar {
    width: 48px;
    height: 48px;
    border-radius: 50%;
    background: #0fa958;
    color: #fff;
    font-size: 22px;
    display: flex;
    align-items: center;
    justify-content: center;
}
.share {
    width: 108px;
    height: 60px;
    margin-left: 42px;
    border: none;
    border-radius: 10px;
    background: #18a0fb;
    color: #fff;
    font: 600 22px Inter, sans-serif;
}
.play {
    margin-left: 52px;
    fill: none;
    stroke: #ccc;
    stroke-width: 2;
}
.zoom {
    margin-left: 64px;
    font-size: 20.500px;
    color: #ccc;
}
.toolbar-right .chev {
    margin-left: 10px;
    stroke: #ccc;
}

/* side panels */
.main {
    flex: 1;
    display: flex;
    min-height: 0;
}
.side {
    width: 480px;
    flex: none;
    background: #fff;
    position: relative;
    z-index: 2;
}
.side-tabs {
    height: 81px;
    border-bottom: 2px solid #e5e5e5;
    display: flex;
    align-items: center;
    padding: 0 32px;
    font-size: 22px;
}
.tab-on {
    font-weight: 600;
    color: #333;
}
.tab-off {
    font-weight: 600;
    color: #b3b3b3;
    margin-left: 31px;
    letter-spacing: -.1px;
}
.page-name {
    margin-left: auto;
    margin-right: 10px;
    font-size: 22px;
}
.layer-row {
    display: flex;
    align-items: center;
    gap: 22px;
    padding: 18px 0 0 38px;
    font-size: 22px;
}
.layer-icon {
    fill: none;
    stroke: #aaa;
    stroke-width: 2;
    stroke-dasharray: 3 4;
}
.sec {
    border-bottom: 2px solid #e5e5e5;
    padding: 0 32px;
}
.sec h3 {
    margin: 0;
    font-size: 22px;
    font-weight: 600;
}
.sec-bg {
    height: 163px;
    padding-top: 36px;
}
.bg-row {
    display: flex;
    align-items: center;
    margin-top: 35px;
    font-size: 22px;
}
.swatch {
    width: 32px;
    height: 32px;
    background: #e5e5e5;
}
.bg-hex {
    margin-left: 17px;
}
.bg-pct {
    margin-left: 66px;
    letter-spacing: -.3px;
}
.eye {
    margin-left: auto;
    margin-right: 1px;
    fill: none;
    stroke: #333;
    stroke-width: 2;
}
.eye circle {
    fill: #333;
    stroke: none;
}
.sec-sel {
    height: 194px;
    padding-top: 36px;
}
.show-btn {
    display: block;
    width: 416px;
    height: 64px;
    margin-top: 34px;
    background: #fff;
    border: 2px solid #333;
    border-radius: 8px;
    font: 400 22px Inter, sans-serif;
    color: #333;
}
.sec-export {
    height: 97px;
    display: flex;
    align-items: center;
    justify-content: space-between;
    padding-right: 37px;
}
.sec-export h3 {
    color: #b3b3b3;
}
.sec-export svg {
    stroke: #b3b3b3;
    stroke-width: 2;
}
.help {
    position: absolute;
    left: 2346px;
    top: 1280px;
    z-index: 3;
    width: 72px;
    height: 72px;
    border-radius: 50%;
    background: #2c2c2c;
    color: #fff;
    font-size: 40px;
    font-weight: 200;
    display: flex;
    align-items: center;
    justify-content: center;
}

/* canvas */
.canvas {
    flex: 1;
    position: relative;
    overflow: hidden;
    background: #e5e5e5;
}
.hscroll {
    position: absolute;
    left: 255px;
    top: 1219px;
    width: 586px;
    height: 12px;
    border-radius: 6px;
    background: #9c9c9c;
    box-shadow: 0 0 0 1px rgba(255, 255, 255, .5);
}
.note-line {
    position: absolute;
    display: flex;
    font-family: Roboto, sans-serif;
    font-size: 4.900px;
    line-height: 6px;
    color: #222;
}
.note-a { left: 128px; top: 71px; }
.note-b { left: 128px; top: 114px; }
.note-c { left: 128px; top: 179px; }
.note-d { left: 128px; top: 260px; }
.note-e { left: 1126px; top: 115px; }
.arrow {
    width: 41px;
    height: 7px;
    margin-right: 6px;
    position: relative;
}
.arrow::before {
    content: "";
    position: absolute;
    left: 0;
    right: 0;
    top: 3px;
    border-top: 1px solid #c8c8c8;
}
.arrow::after {
    content: "";
    position: absolute;
    right: 0;
    top: 1px;
    width: 5px;
    height: 5px;
    border-top: 1px solid #c8c8c8;
    border-right: 1px solid #c8c8c8;
    transform: rotate(45deg);
}
.note {
    width: 120px;
    background: #c4c4c4;
    padding: 2px 4px;
    white-space: nowrap;
    filter: blur(.25px);
}
.note-h1 { height: 21px; }
.note-h2 { height: 27px; }
.note-h3 { height: 19px; }
.note-h4 { height: 35px; padding-top: 3px; }

/* frames */
.frame {
    position: absolute;
    width: 722px;
    height: 513px;
    overflow: hidden;
    background: #fff;
    font-family: Roboto, sans-serif;
    color: #333;
    filter: blur(.25px);
}
.frame-a { left: -601px; top: 41px; }
.frame-b { left: 397px; top: 41px; }
.frame-c { left: -594px; top: 684px; }
.frame-d { left: 397px; top: 684px; }
.frame-e { left: 1387px; top: 684px; width: 117px; }
.ic {
    flex: none;
}
.f-tabs {
    height: 19px;
    display: flex;
    align-items: flex-end;
    background: linear-gradient(#56564c, #3e3e38);
    font-size: 8.400px;
    color: #c4c4c4;
}
.tab {
    width: 130px;
    height: 18px;
    display: flex;
    align-items: center;
    padding: 0 6px 0 10px;
}
.tab b {
    margin-left: auto;
    font-weight: 400;
    font-size: 9px;
}
.tab-active {
    width: 127px;
    height: 18px;
    background: #f1f1f1;
    color: #555;
    border-radius: 3px 3px 0 0;
}
.ic-logo {
    width: 9px;
    height: 9px;
    margin-right: 4px;
}
.tab-plus {
    align-self: center;
    margin-left: 8px;
    font-size: 11px;
    color: #ddd;
}
.win {
    align-self: center;
    margin-left: auto;
    display: flex;
    gap: 2px;
    padding-right: 3px;
}
.win i {
    width: 8px;
    height: 8px;
    border-radius: 50%;
    background: #77776c;
}
.win .win-close {
    background: #e95420;
}
.f-addr {
    height: 20px;
    display: flex;
    align-items: center;
    background: #f1f1f1;
    padding: 0 2px 0 8px;
    font-size: 7.500px;
}
.ic-nav {
    width: 9px;
    height: 9px;
    margin-right: 8px;
}
.addr-pill {
    width: 573px;
    height: 14px;
    margin-left: -2px;
    flex: none;
    display: flex;
    align-items: center;
    background: #fff;
    border-radius: 7px;
    padding: 0 5px 0 7px;
    color: #555;
}
.addr-pill-end {
    margin-left: auto;
    width: 30px;
    border-radius: 0 7px 7px 0;
    justify-content: flex-end;
    padding-right: 3px;
}
.f-addr-right {
    justify-content: flex-end;
}
.ic-lock {
    width: 5px;
    height: 6px;
    margin-right: 4px;
}
.url {
    flex: 1;
}
.ic-star {
    width: 8px;
    height: 8px;
}
.ic-ext {
    width: 12px;
    height: 12px;
    margin-left: 8px;
}
.ext-red {
    width: 8px;
    height: 10px;
    margin-left: 6px;
    background: #e00;
}
.ic-puzzle {
    width: 8px;
    height: 8px;
    margin-left: 8px;
}
.profile {
    width: 12px;
    height: 12px;
    margin-left: 8px;
    border-radius: 50%;
    background: #d5004f;
    color: #fff;
    font-size: 5px;
    display: flex;
    align-items: center;
    justify-content: center;
}
.ic-dots {
    width: 4px;
    height: 9px;
}
.f-addr .ic-dots {
    margin: 0 7px 0 9px;
}
.f-app {
    height: 21.500px;
    display: flex;
    align-items: center;
    background: #3d3d3d;
    border-bottom: 1px solid #666;
    color: #ddd;
    font-size: 7.500px;
    padding: 0 7px 0 3px;
}
.f-app-right {
    justify-content: flex-end;
}
.org {
    width: 142px;
    height: 18px;
    flex: none;
    display: flex;
    align-items: center;
    background: #555;
    padding-left: 5px;
}
.ic-org {
    width: 12px;
    height: 12px;
}
.org-text {
    display: flex;
    flex-direction: column;
    margin-left: 5px;
    line-height: 7.800px;
}
.org-text strong {
    font-size: 7.400px;
    font-weight: 500;
    color: #eee;
}
.org-text span {
    font-size: 6.600px;
    color: #aaa;
}
.ic-org-chev {
    width: 5px;
    height: 5px;
    margin-left: auto;
    margin-right: 7px;
    filter: invert(1);
}
.centro {
    margin-left: 370px;
    font-size: 6px;
}
.ic-lock2 {
    width: 7px;
    height: 8px;
    margin-left: 5px;
    filter: invert(1);
}
.ic-search {
    width: 7px;
    height: 7px;
    margin-left: 8px;
}
.user {
    margin-left: 41px;
    font-size: 7.500px;
    color: #eee;
}
.mf {
    width: 13px;
    height: 13px;
    margin-left: 5px;
    border-radius: 50%;
    background: #fff;
    color: #aaa;
    font-size: 5px;
    display: flex;
    align-items: center;
    justify-content: center;
}
.ic-bell {
    width: 8px;
    height: 10px;
    margin-left: 7px;
}
.ic-grid {
    width: 9px;
    height: 9px;
    margin-left: 9px;
}
.f-head {
    height: 52px;
    display: flex;
    align-items: flex-start;
    border-bottom: 1px solid #ccc;
    font-size: 7.800px;
    color: #999;
}
.f-head-right {
    justify-content: flex-end;
    padding: 10px 8px 0 0;
    gap: 6px;
}
.stripe {
    width: 10px;
    height: 51px;
    flex: none;
    background: #ff9800;
}
.thumbnail {
    width: 36px;
    height: 38px;
    flex: none;
    margin: 8px 0 0 6px;
    fill: none;
    stroke: #ddd;
    stroke-width: .7;
}
.head-text {
    display: flex;
    flex-direction: column;
    margin: 8.500px 0 0 6px;
    line-height: 12.400px;
    white-space: nowrap;
}
.pill {
    width: 31px;
    height: 15px;
    border: 1px solid #ddd;
    border-radius: 8px;
    display: flex;
    align-items: center;
    justify-content: center;
    font-size: 7.800px;
    color: #777;
}
.pill-muted {
    color: #999;
}
.pill-first {
    margin: 10px 0 0 376px;
}
.save {
    width: 46px;
    height: 16px;
    margin: 9px 0 0 11px;
    background: #5b54c9;
    color: #ddd;
    font-size: 6.800px;
    display: flex;
    align-items: center;
    justify-content: center;
}
.dots-btn {
    width: 15px;
    height: 15px;
    flex: none;
    border: 1px solid #ddd;
    border-radius: 50%;
    background: #fff;
    display: flex;
    align-items: center;
    justify-content: center;
}
.dots-head {
    margin: 10px 0 0 12px;
}
.f-head-d .pill-first {
    margin-left: 358px;
}
.f-head-d .dots-head {
    margin-left: 14px;
}

/* body */
.f-body {
    height: 400.500px;
    display: flex;
}
.f-left {
    width: 269px;
    flex: none;
    padding: 11px 0 0 25px;
}
.lbl {
    margin: 0;
    font-weight: 400;
    font-size: 8px;
    line-height: 10px;
    color: #888;
    display: flex;
    align-items: center;
    gap: 4px;
}
.lbl-desc {
    margin-top: 23.500px;
}
.lbl-note {
    margin-top: 14px;
}
.lbl-int {
    margin-top: 12px;
}
.ic-info {
    width: 7px;
    height: 7px;
}
.add-box {
    width: 231px;
    height: 21px;
    margin-top: 5.500px;
    border: 1px dashed #ddd;
    display: flex;
    align-items: center;
    justify-content: space-between;
    padding: 0 5px 0 7px;
    font-size: 8px;
    color: #888;
}
.ic-plus {
    width: 8px;
    height: 8px;
}
.dates {
    width: 231px;
    height: 21px;
    margin-top: 7.500px;
    display: flex;
    align-items: center;
    background: #f8f8f8;
    border: 1px solid #f1f1f1;
    padding-left: 2px;
    font-size: 6.200px;
}
.d-lbl {
    color: #999;
    width: 21px;
    font-size: 5.800px;
}
.d-lbl-2 {
    margin-left: 9px;
}
.d-val {
    width: 54px;
    height: 11px;
    border-bottom: 1px solid #777;
    text-align: center;
    line-height: 10px;
}
.period {
    width: 231px;
    height: 21.500px;
    margin-top: 7.500px;
    display: flex;
    align-items: center;
    justify-content: space-between;
    background: #f8f8f8;
    border: 1px solid #f1f1f1;
    padding: 0 7px 0 2px;
}
.chip {
    width: 94px;
    height: 14.500px;
    display: flex;
    align-items: center;
    background: #fff;
    border: 1px solid #ddd;
    font-size: 5.800px;
    white-space: nowrap;
}
.chip-n {
    width: 15px;
    height: 100%;
    flex: none;
    border-right: 1px solid #ddd;
    color: #999;
    text-align: center;
    line-height: 12px;
}
.chip-t {
    padding-left: 5px;
    color: #333;
}
.chip-vig .chip-t {
    padding-left: 8px;
}
.chip u, .cod u, .set u, .vig-foot u, .req u {
    text-decoration: none;
    border-bottom: 1px solid #999;
}
.ic-pencil {
    width: 8px;
    height: 8px;
}
.vig-tab {
    display: flex;
    align-items: center;
    justify-content: center;
    position: relative;
    z-index: 1;
    width: 36px;
    height: 12px;
    margin-top: 7px;
    background: #f8f8f8;
    border: 1px solid #888;
    border-bottom: none;
    border-radius: 2px 2px 0 0;
    font-size: 5.500px;
    color: #888;
}
.vig {
    width: 244px;
    height: 102.500px;
    margin-top: -1px;
    background: #f8f8f8;
    border: 1px solid #888;
    border-right: none;
    border-radius: 0 0 0 2px;
    padding: 5px 0 0 1px;
}
.vig-lbl {
    margin: 7px 0 0 6px;
    font-size: 5.300px;
    color: #888;
}
.vig-text {
    width: 235px;
    height: 40px;
    margin: 4.300px 0 0 6px;
    padding: 4.500px 5px;
    background: #fff;
    font-size: 5.700px;
    line-height: 7px;
    color: #333;
}
.vig-foot {
    margin: 8.500px 0 0 6px;
    font-size: 5.700px;
    color: #888;
}
.vig-foot u {
    color: #333;
}
.prev {
    display: block;
    margin: 8px 0 0 7px;
    font-size: 5.500px;
    color: #3b8fe8;
}
.note-box {
    width: 230px;
    height: 42px;
    margin-top: 6px;
    padding: 7px;
    background: #f8f8f8;
    border: 1px solid #f1f1f1;
    font-size: 5.800px;
}

/* right panel inside frame */
.panel {
    width: 429px;
    height: 420px;
    flex: none;
    margin-top: 15px;
    background: #f8f8f8;
    border: 1px solid #aaa;
    border-radius: 2px;
    padding: 11px 12px 0 15.500px;
}
.panel-short {
    height: 367px;
    margin-top: 10px;
}
.p-top {
    height: 18.500px;
    display: flex;
    align-items: flex-start;
    border-bottom: 1px solid #e2e2e2;
}
.panel-short .p-top {
    padding-top: 2px;
    height: 19.500px;
}
.panel-a {
    padding-right: 14px;
}
.p-tab {
    padding: 4px 4px 3px 1px;
    margin-right: 12px;
    height: 18.500px;
    font-size: 7.800px;
    color: #888;
    white-space: nowrap;
}
.p-tab-on {
    color: #333;
    border-bottom: 1px solid #222;
}
.search {
    width: 86px;
    height: 14.500px;
    margin-left: auto;
    margin-right: 6px;
    border: 1px solid #e0e0e0;
    border-radius: 8px;
    background: #fff;
    font-size: 4.800px;
    line-height: 12.500px;
    padding-left: 5px;
    color: #aaa;
    white-space: nowrap;
}
.search-none {
    visibility: hidden;
}
.p-add {
    height: 21.500px;
    margin-top: 15px;
    display: flex;
    align-items: center;
    border: 1px dashed #ddd;
    font-size: 5.800px;
    color: #888;
}
.p-add-d {
    margin-left: 1px;
    margin-right: -2px;
}
.p-add-plus {
    width: 22px;
    height: 100%;
    margin-right: 4.500px;
    display: flex;
    align-items: center;
    justify-content: center;
    border-right: 1px solid #eee;
}
.p-add-plus .ic-plus {
    width: 7px;
    height: 7px;
}
.p-rows {
    width: 398px;
    margin-top: 7px;
    display: flex;
    flex-direction: column;
    gap: 7.700px;
}
.row {
    height: 22px;
    flex: none;
    display: flex;
    background: #fff;
    border: 1px solid #eee;
    position: relative;
}
.row-n {
    width: 22px;
    flex: none;
    border-right: 1px solid #e5e5e5;
    color: #888;
    font-size: 5.500px;
    display: flex;
    align-items: center;
    justify-content: center;
}
.row-n-top {
    align-items: flex-start;
    padding-top: 7px;
}
.row-main {
    flex: 1;
    padding-left: 4.500px;
    align-self: center;
}
.row-title {
    font-size: 5.800px;
    line-height: 7px;
    color: #222;
}
.row-sub {
    margin-top: 1.500px;
    font-size: 4.300px;
    color: #aaa;
}
.flags {
    width: 140px;
    margin-left: auto;
    flex: none;
    padding-top: 2.500px;
    font-size: 5.200px;
}
.flag-line {
    height: 8px;
    display: flex;
    align-items: center;
}
.flag {
    display: flex;
    align-items: center;
    color: #333;
    white-space: nowrap;
}
.flag.off {
    color: #ccc;
}
.flag-o { width: 48px; }
.flag-a { width: 44px; }
.flag-l { width: 31px; }
.ic-flag {
    width: 4.500px;
    height: 4.500px;
    margin-right: 2px;
}
.ic-trash {
    width: 4px;
    height: 5px;
}
.ic-chev {
    width: 5px;
    height: 5px;
    margin-left: 5px;
}
.row-open {
    height: 250px;
    border-color: #888;
}
.row-n-on {
    color: #222;
    font-weight: 700;
    align-items: flex-start;
    padding-top: 3.500px;
}
.row-detail {
    flex: 1;
    min-width: 0;
}
.row-head {
    display: flex;
    align-items: flex-start;
}
.row-head .row-main {
    align-self: flex-start;
    padding-top: 3px;
}
.cod {
    font-size: 4.300px;
    line-height: 7.700px;
    color: #aaa;
    padding-left: 1px;
}
.cod-first {
    margin-top: 1.500px;
}
.req {
    display: flex;
    align-items: center;
    height: 7px;
    margin-left: 5px;
    font-size: 4.300px;
}
.req em {
    width: 47px;
    font-style: italic;
    white-space: nowrap;
}
.req .req-days {
    margin-left: 4px;
    color: #aaa;
}
.yn {
    width: 8px;
    height: 7px;
    margin-right: 3px;
    background: #e3e3e3;
    color: #777;
    text-align: center;
    line-height: 7px;
}
.yn.on {
    background: #4a7fd6;
    color: #fff;
}
.patient {
    width: 362.500px;
    height: 17.500px;
    margin: 2px 0 0 4.500px;
    padding: 2px 3px;
    background: #f8f8f8;
    border: 1px solid #eee;
    font-size: 4.300px;
    color: #bbb;
}
.req-2 {
    margin-top: 3px;
}
.req-2 em, .req-3 em {
    width: 48px;
}
.req-3 {
    margin-top: 1.500px;
}
.spec {
    width: 170px;
    height: 16px;
    margin: 10px 0 0 5.500px;
    display: flex;
    align-items: center;
    border: 1px dashed #ddd;
    font-size: 5.800px;
    color: #999;
}
.spec-plus {
    width: 17px;
    height: 100%;
    margin-right: 4px;
    display: flex;
    align-items: center;
    justify-content: center;
    border-right: 1px solid #eee;
}
.spec-plus .ic-plus {
    width: 6px;
    height: 6px;
}
.cards {
    display: flex;
    margin: 7px 0 0 4.500px;
    gap: 13.300px;
    align-items: flex-start;
}
.card {
    width: 171px;
    height: 86px;
    flex: none;
    background: #fff;
    border: 1px solid #e5e5e5;
    border-radius: 2px;
    padding: 0 5px 0 6px;
    font-size: 4.900px;
    line-height: 8px;
    color: #888;
}
.card-2 {
    width: 180px;
    height: 110px;
    padding: 1px 5px 0 7px;
}
.card-top {
    display: flex;
    justify-content: space-between;
    align-items: center;
    height: 8px;
    color: #333;
}
.kv {
    height: 8px;
    display: flex;
    justify-content: space-between;
}
.kv b {
    font-weight: 400;
    color: #333;
    text-align: right;
    border-bottom: 1px solid #eee;
    white-space: nowrap;
}
.kv i {
    font-style: normal;
    color: #333;
}
.w-l { width: 65px; }
.w-m { width: 44px; }
.w-s { width: 29px; }
.kv-head {
    justify-content: flex-start;
    align-items: center;
    color: #333;
    font-weight: 700;
}
.kv-off {
    justify-content: flex-start;
    align-items: center;
    color: #ccc;
}
.kv-in {
    padding-left: 5px;
}
.anexo {
    height: 11px;
    margin: 1px 0 0 8px;
    display: flex;
    align-items: center;
    border: 1px solid #eee;
    padding-left: 3px;
    color: #333;
    white-space: nowrap;
    overflow: hidden;
}
.anexo span {
    flex: 1;
}
.anexo i {
    font-style: normal;
    color: #aaa;
}

/* rows of frame A */
.p-rows-a {
    margin-top: 12px;
}
.panel-a .row {
    width: 396px;
    justify-content: flex-end;
}
.panel-a .p-rows {
    width: 396px;
}
.panel-a .flags {
    width: 139px;
}
.row-open-a {
    height: 117px;
    display: block;
}
.row-open-a .flags {
    margin-left: 257px;
}
.row-after-a {
    margin-top: 3px;
}
.a-card {
    width: 200px;
    height: 84px;
    margin: 19px 0 0 181px;
    padding: 60px 3px 0 0;
    background: #fff;
    border: 1px solid #eee;
    display: flex;
    flex-direction: column;
    align-items: flex-end;
    gap: 2px;
}
.a-mini {
    width: 40px;
    height: 10px;
    display: flex;
    align-items: center;
    justify-content: flex-end;
    border: 1px solid #eee;
    padding-right: 3px;
}

/* rows of frame C */
.p-rows-c {
    margin-top: 12px;
}
.ic-chev-end {
    margin: 7px 7px 0 auto;
}
.row-open-c {
    height: 220.500px;
    display: block;
}
.row-open-c .ic-chev-end {
    display: block;
    margin-left: 380px;
}
.c-stack {
    margin: 10px 0 0 0;
    width: 372px;
    display: flex;
    flex-direction: column;
    gap: 8.500px;
}
.c-info {
    height: 18.500px;
    background: #f5f5f5;
    border-radius: 2px;
}
.c-def {
    height: 51px;
    border: 1px solid #e5e5e5;
    border-radius: 2px;
    padding-top: 19px;
}
.c-def span {
    display: block;
    width: 367px;
    border-top: 1px solid #eee;
}
.c-def-last {
    height: 44px;
}
.row-after-c {
    margin-top: -1px;
}

/* rules of frame D */
.rule-name {
    padding-left: 5px;
    align-self: center;
    font-size: 5.800px;
    color: #222;
}
.ic-chev-rule {
    margin: 6px 8px 0 auto;
}
.row-rule {
    height: 219px;
}
.rule-head {
    height: 21px;
    display: flex;
}
.rule-info {
    width: 345px;
    height: 18.500px;
    margin: 5px 0 0 6px;
    padding: 2.500px 4px;
    display: flex;
    gap: 3px;
    background: #f5f5f5;
    border-radius: 2px;
    font-size: 4.600px;
    line-height: 6px;
    color: #777;
}
.rule-info .ic-info {
    width: 5px;
    height: 5px;
    margin-top: .500px;
}
.def {
    width: 345px;
    height: 51px;
    margin: 7.500px 0 0 6px;
    padding: 0 5px;
    background: #fff;
    border: 1px solid #e5e5e5;
    border-radius: 2px;
}
.def-title {
    height: 18.500px;
    border-bottom: 1px solid #eee;
    font-size: 4.800px;
    line-height: 19px;
    color: #333;
}
.def-lbl {
    margin-top: 5px;
    font-size: 4.800px;
    color: #aaa;
}
.def-chips {
    display: flex;
    gap: 5px;
    margin-top: 2.500px;
}
.p-chip {
    height: 10px;
    padding: 0 4px;
    display: flex;
    align-items: center;
    border: 1px solid #ddd;
    font-size: 4.800px;
    white-space: nowrap;
}
.p-chip-add {
    border: 1px dashed #ddd;
    color: #aaa;
}
.def-action {
    height: 41px;
    margin-top: 8px;
}
.set {
    margin-top: 5px;
    font-size: 6.500px;
    color: #333;
}
.set span {
    margin-left: 15px;
}
.set u {
    padding: 0 5px;
}

/* scrollbar of a frame */
.f-scroll {
    width: 6.500px;
    margin-left: 17.500px;
    flex: none;
    height: 100%;
    background: #f1f1f1;
    padding-top: 8px;
}
.thumb {
    display: block;
    height: 48px;
    background: #c1c1c1;
}
```
